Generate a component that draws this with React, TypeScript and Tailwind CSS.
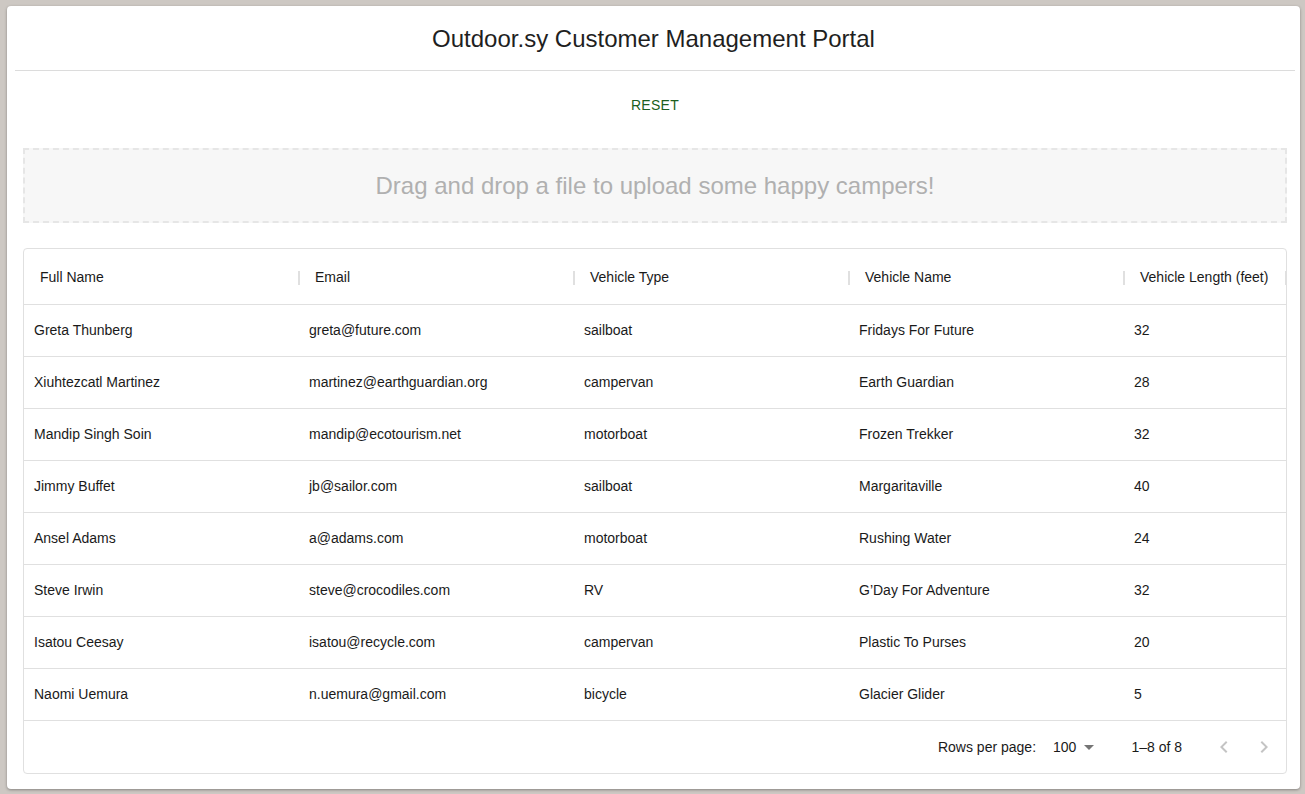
import React from "react";

const rows = [
  ["Greta Thunberg", "greta@future.com", "sailboat", "Fridays For Future", "32"],
  ["Xiuhtezcatl Martinez", "martinez@earthguardian.org", "campervan", "Earth Guardian", "28"],
  ["Mandip Singh Soin", "mandip@ecotourism.net", "motorboat", "Frozen Trekker", "32"],
  ["Jimmy Buffet", "jb@sailor.com", "sailboat", "Margaritaville", "40"],
  ["Ansel Adams", "a@adams.com", "motorboat", "Rushing Water", "24"],
  ["Steve Irwin", "steve@crocodiles.com", "RV", "G\u2019Day For Adventure", "32"],
  ["Isatou Ceesay", "isatou@recycle.com", "campervan", "Plastic To Purses", "20"],
  ["Naomi Uemura", "n.uemura@gmail.com", "bicycle", "Glacier Glider", "5"],
];

const headers = ["Full Name", "Email", "Vehicle Type", "Vehicle Name", "Vehicle Length (feet)"];

export default function App() {
  return (
    <div
      className="w-[1305px] h-[794px] bg-[#cdc8c3] pt-[6px] pl-[7px] overflow-hidden text-[rgba(0,0,0,0.87)]"
      style={{ fontFamily: '"Liberation Sans", Arial, Helvetica, sans-serif' }}
    >
      <div className="w-[1293px] h-[783px] bg-white rounded-[4px] shadow-[0_1px_3px_rgba(0,0,0,0.35)] flex flex-col">
        <div className="h-[64px] flex items-center justify-center">
          <h1 className="text-[24px] leading-none text-[#1f1f1f] mt-[1px]">Outdoor.sy Customer Management Portal</h1>
        </div>
        <div className="h-[1px] bg-[#dcdcdc] ml-[8px] mr-[5px]" />
        <div className="flex justify-center mt-[16px]">
          <button className="h-[36px] px-2 text-[14px] uppercase text-[#1b5e20] tracking-[0.3px] ml-[3px]">Reset</button>
        </div>
        <div className="pl-4 pr-[13px] flex flex-col">
          <div className="mt-[25px] h-[75px] border-2 border-dashed border-[#e6e6e6] bg-[#f7f7f7] flex items-center justify-center">
            <span className="text-[24px] text-[#b0b0b0]">Drag and drop a file to upload some happy campers!</span>
          </div>
          <div className="mt-[25px] border border-[#e0e0e0] rounded-[4px] flex flex-col text-[14px]">
            <div className="h-[56px] flex items-center border-b border-[#e0e0e0]">
              {headers.map((h, i) => (
                <div
                  key={h}
                  className={`${i === 4 ? "flex-1" : "w-[275px]"} h-full flex items-center justify-between pl-4 pt-[2px]`}
                >
                  <span className="text-[#1a1a1a]">{h}</span>
                  <span className="w-[2px] h-[14px] bg-[#e0e0e0] mr-[-1px]" />
                </div>
              ))}
            </div>
            {rows.map((r) => (
              <div key={r[0]} className="h-[52px] flex items-center border-b border-[#e0e0e0]">
                {r.map((c, i) => (
                  <div key={i} className={`${i === 4 ? "flex-1" : "w-[275px]"} pl-[10px] text-[#1a1a1a]`}>
                    {c}
                  </div>
                ))}
              </div>
            ))}
            <div className="h-[52px] flex items-center justify-end text-[#1a1a1a]">
              <span>Rows per page:</span>
              <span className="ml-[17px]">100</span>
              <svg width="10" height="5" viewBox="0 0 10 5" className="ml-[8px] mt-[1px]">
                <path d="M0 0 L10 0 L5 5 Z" fill="#757575" />
              </svg>
              <span className="ml-[37px]">1–8 of 8</span>
              <svg width="24" height="24" viewBox="0 0 24 24" className="ml-[30px]">
                <path d="M15.41 7.41 14 6l-6 6 6 6 1.41-1.41L10.83 12z" fill="#c4c4c4" />
              </svg>
              <svg width="24" height="24" viewBox="0 0 24 24" className="ml-[16px] mr-[10px]">
                <path d="M10 6 8.59 7.41 13.17 12l-4.58 4.59L10 18l6-6z" fill="#c4c4c4" />
              </svg>
            </div>
          </div>
        </div>
      </div>
    </div>
  );
}
